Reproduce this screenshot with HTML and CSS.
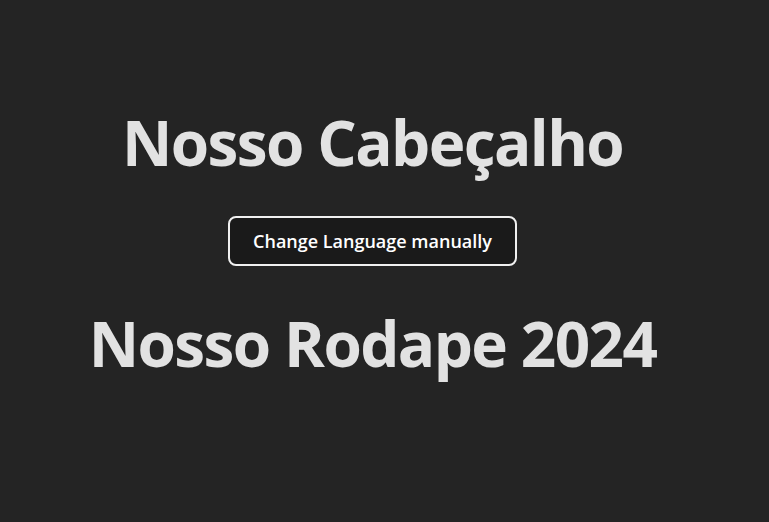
FILE: index.html
```html
<!DOCTYPE html>
<html lang="pt-BR">
<head>
    <meta charset="UTF-8">
    <meta name="viewport" content="width=device-width, initial-scale=1.0">
    <title>Nosso Site</title>
    <link rel="stylesheet" href="styles.css">
</head>
<body>
    <div class="app">
        <header class="site-header">
            <h1>Nosso Cabeçalho</h1>
        </header>

        <!-- Troca de idioma -->
        <button type="button" class="lang-button">Change Language manually</button>

        <footer class="site-footer">
            <h1>Nosso Rodape 2024</h1>
        </footer>
    </div>
</body>
</html>
```

FILE: styles.css
```css
/* Estilo geral */
body {
    margin: 0;
    padding: 0;
    font-family: 'Open Sans', 'Noto Sans', sans-serif;
    background-color: #242424;
    color: rgba(255, 255, 255, 0.87);
    min-height: 100vh;
}

.app {
    width: 745px;
    padding-top: 105px;
    display: flex;
    flex-direction: column;
    align-items: center;
}

h1 {
    margin: 0;
    font-size: 62px;
    font-weight: 700;
    line-height: 1.2;
    letter-spacing: -1.6px;
    white-space: nowrap;
}

.lang-button {
    margin-top: 37px;
    padding: 11px 23px;
    border: 2px solid #f0f0f0;
    border-radius: 8px;
    background-color: #1a1a1a;
    color: white;
    font-family: inherit;
    font-size: 18px;
    font-weight: 600;
    line-height: 24px;
    cursor: pointer;
}

.site-footer {
    margin-top: 40px;
}
```
